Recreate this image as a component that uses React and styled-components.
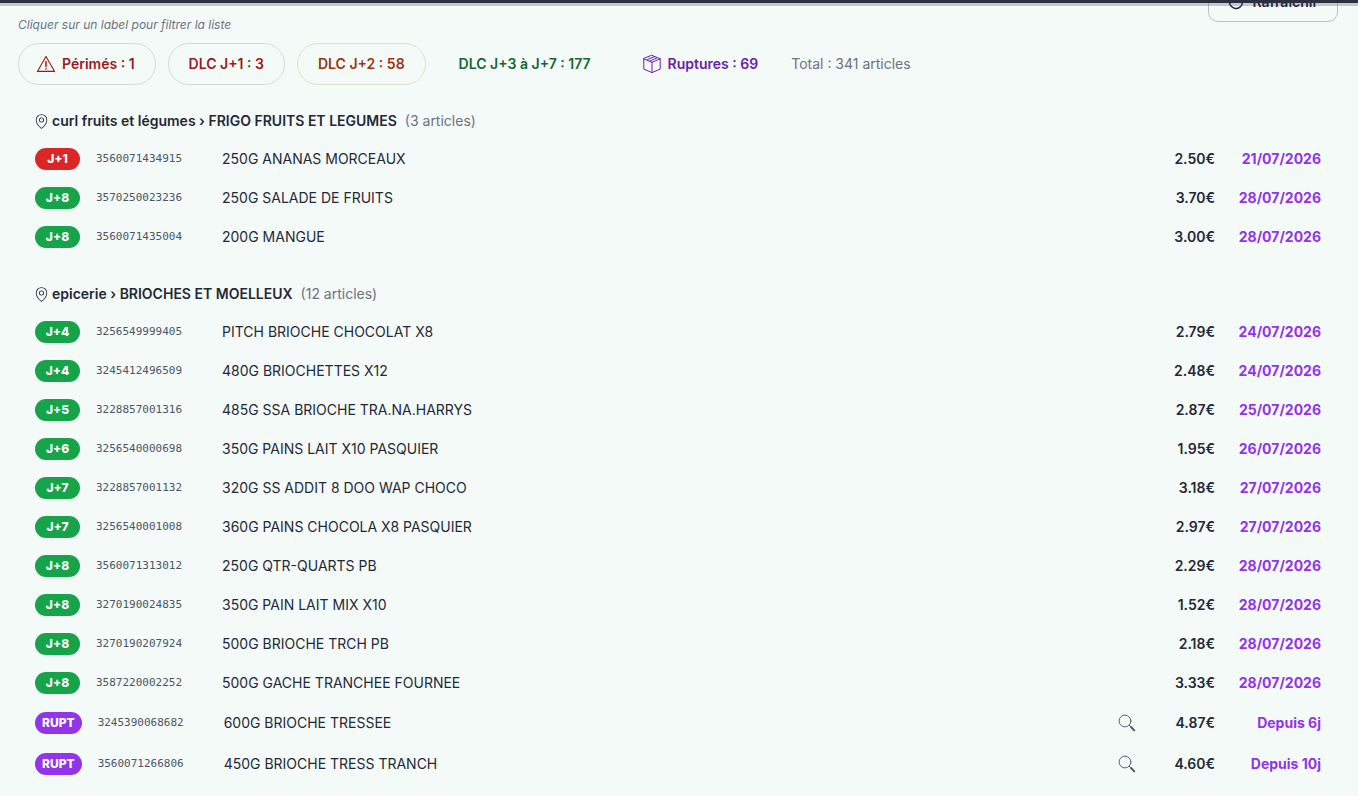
import React from 'react';
import styled, { createGlobalStyle } from 'styled-components';
import { PiMapPinLight } from 'react-icons/pi';

const WarningIcon = () => (
  <svg
    width="1em"
    height="1em"
    viewBox="0 0 20 20"
    fill="none"
    stroke="currentColor"
    strokeLinejoin="round"
    strokeLinecap="round"
  >
    <path d="M10 2.4 18.6 17.4H1.4Z" strokeWidth="1.1" />
    <path d="M10 7.6V12.4M10 14.8V15" strokeWidth="1.5" />
  </svg>
);

const PackageIcon = () => (
  <svg
    width="1em"
    height="1em"
    viewBox="0 0 20 20"
    fill="none"
    stroke="currentColor"
    strokeWidth="1"
    strokeLinejoin="round"
    strokeLinecap="round"
  >
    <path d="M10 1.4 18.2 4.8V15.1L10 18.6 1.8 15.1V4.8Z" />
    <path d="M1.8 4.8 10 8.3 18.2 4.8M10 8.3V18.6" />
    <path d="M5.6 6.4V5.4L12.8 2.6M7.6 7.2 14.9 3.9" />
  </svg>
);

const SearchIcon = () => (
  <svg
    width="1em"
    height="1em"
    viewBox="0 0 18 18"
    fill="none"
    stroke="#4b5563"
    strokeLinecap="round"
  >
    <circle cx="7" cy="7" r="5.9" strokeWidth="0.9" />
    <path d="M11.3 11.3 12.9 12.9" strokeWidth="1" />
    <path d="M13 13 16.3 16.3" strokeWidth="1.9" />
  </svg>
);

const RefreshIcon = () => (
  <svg
    width="1em"
    height="1em"
    viewBox="0 0 16 16"
    fill="none"
    stroke="currentColor"
    strokeWidth="1.5"
    strokeLinecap="round"
    strokeLinejoin="round"
  >
    <path d="M12.6 3.4A6.5 6.5 0 1 0 14.5 8" />
    <path d="M12.8 0.8V3.8H9.8" />
  </svg>
);

const FILTERS = [
  { label: 'Périmés : 1', color: '#991b1b', border: '#d5dcdc', icon: WarningIcon },
  { label: 'DLC J+1 : 3', color: '#991b1b', border: '#d5dcdc' },
  { label: 'DLC J+2 : 58', color: '#9a3412', border: '#e3e0c8' },
  { label: 'DLC J+3 à J+7 : 177', color: '#166534', border: 'transparent' },
  { label: 'Ruptures : 69', color: '#6b21a8', border: 'transparent', icon: PackageIcon },
];

const BADGE_COLORS = {
  urgent: '#dc2626',
  ok: '#16a34a',
  rupture: '#9333ea',
};

const GROUPS = [
  {
    zone: 'curl fruits et légumes',
    shelf: 'FRIGO FRUITS ET LEGUMES',
    items: [
      { badge: 'J+1', type: 'urgent', ean: '3560071434915', name: '250G ANANAS MORCEAUX', price: '2.50€', date: '21/07/2026' },
      { badge: 'J+8', type: 'ok', ean: '3570250023236', name: '250G SALADE DE FRUITS', price: '3.70€', date: '28/07/2026' },
      { badge: 'J+8', type: 'ok', ean: '3560071435004', name: '200G MANGUE', price: '3.00€', date: '28/07/2026' },
    ],
  },
  {
    zone: 'epicerie',
    shelf: 'BRIOCHES ET MOELLEUX',
    items: [
      { badge: 'J+4', type: 'ok', ean: '3256549999405', name: 'PITCH BRIOCHE CHOCOLAT X8', price: '2.79€', date: '24/07/2026' },
      { badge: 'J+4', type: 'ok', ean: '3245412496509', name: '480G BRIOCHETTES X12', price: '2.48€', date: '24/07/2026' },
      { badge: 'J+5', type: 'ok', ean: '3228857001316', name: '485G SSA BRIOCHE TRA.NA.HARRYS', price: '2.87€', date: '25/07/2026' },
      { badge: 'J+6', type: 'ok', ean: '3256540000698', name: '350G PAINS LAIT X10 PASQUIER', price: '1.95€', date: '26/07/2026' },
      { badge: 'J+7', type: 'ok', ean: '3228857001132', name: '320G SS ADDIT 8 DOO WAP CHOCO', price: '3.18€', date: '27/07/2026' },
      { badge: 'J+7', type: 'ok', ean: '3256540001008', name: '360G PAINS CHOCOLA X8 PASQUIER', price: '2.97€', date: '27/07/2026' },
      { badge: 'J+8', type: 'ok', ean: '3560071313012', name: '250G QTR-QUARTS PB', price: '2.29€', date: '28/07/2026' },
      { badge: 'J+8', type: 'ok', ean: '3270190024835', name: '350G PAIN LAIT MIX X10', price: '1.52€', date: '28/07/2026' },
      { badge: 'J+8', type: 'ok', ean: '3270190207924', name: '500G BRIOCHE TRCH PB', price: '2.18€', date: '28/07/2026' },
      { badge: 'J+8', type: 'ok', ean: '3587220002252', name: '500G GACHE TRANCHEE FOURNEE', price: '3.33€', date: '28/07/2026' },
      { badge: 'RUPT', type: 'rupture', ean: '3245390068682', name: '600G BRIOCHE TRESSEE', price: '4.87€', date: 'Depuis 6j' },
      { badge: 'RUPT', type: 'rupture', ean: '3560071266806', name: '450G BRIOCHE TRESS TRANCH', price: '4.60€', date: 'Depuis 10j' },
    ],
  },
];

const Article = ({ item }) => (
  <Row>
    <Badge $type={item.type}>{item.badge}</Badge>
    <Ean>{item.ean}</Ean>
    <Name>{item.name}</Name>
    {item.type === 'rupture' && (
      <SearchButton type="button" aria-label={`Rechercher ${item.name}`}>
        <SearchIcon />
      </SearchButton>
    )}
    <Price>{item.price}</Price>
    <Expiry>{item.date}</Expiry>
  </Row>
);

const App = () => {
  return (
    <Page>
      <GlobalStyle />
      <TopBar />
      <Content>
        <Header>
          <Hint>Cliquer sur un label pour filtrer la liste</Hint>
          <RefreshButton type="button">
            <RefreshIcon />
            Rafraîchir
          </RefreshButton>
        </Header>
        <Filters>
          {FILTERS.map(({ label, color, border, icon: Icon }) => (
            <Filter key={label} type="button" $color={color} $border={border}>
              {Icon && <Icon />}
              {label}
            </Filter>
          ))}
          <Total>Total : 341 articles</Total>
        </Filters>
        <Groups>
          {GROUPS.map(group => (
            <section key={group.shelf}>
              <GroupTitle>
                <PiMapPinLight />
                {group.zone} › {group.shelf}
                <Count>({group.items.length} articles)</Count>
              </GroupTitle>
              <List>
                {group.items.map(item => (
                  <Article key={item.ean} item={item} />
                ))}
              </List>
            </section>
          ))}
        </Groups>
      </Content>
    </Page>
  );
};

export default App;

const GlobalStyle = createGlobalStyle`
  * {
    box-sizing: border-box;
  }

  body {
    margin: 0;
    background: #f4faf8;
    color: #1f2937;
    font-family: Inter, 'Liberation Sans', sans-serif;
    font-size: 14px;
    line-height: 22px;
  }

  button {
    font: inherit;
    color: inherit;
    cursor: pointer;
  }

  svg {
    flex-shrink: 0;
  }
`;

const Page = styled.div`
  min-height: 100vh;
  overflow: hidden;
`;

const TopBar = styled.div`
  position: relative;
  z-index: 1;
  height: 3px;
  background: #2c2f3f;
  box-shadow: 0 3px 0 rgba(44, 47, 63, 0.24);
`;

const Content = styled.main`
  padding: 0 20px 0 18px;
`;

const Header = styled.header`
  display: flex;
  align-items: flex-end;
  justify-content: space-between;
  height: 33px;
`;

const Hint = styled.p`
  margin: 0;
  color: #6b7280;
  font-size: 12px;
  font-style: italic;
`;

const RefreshButton = styled.button`
  display: flex;
  align-items: center;
  align-self: flex-start;
  gap: 8px;
  height: 40px;
  margin-top: -21px;
  padding: 0 19px;
  border: 1px solid #bcc2c4;
  border-radius: 10px;
  background: transparent;
  font-weight: 600;

  svg {
    font-size: 16px;
  }
`;

const Filters = styled.div`
  display: flex;
  flex-wrap: wrap;
  align-items: center;
  gap: 12px;
  margin-top: 7px;
`;

const Filter = styled.button`
  display: flex;
  align-items: center;
  gap: 6px;
  height: 42px;
  padding: 0 20px;
  border: 1px solid ${props => props.$border};
  border-radius: 21px;
  background: transparent;
  color: ${props => props.$color};
  font-weight: 600;

  svg {
    margin-left: -3px;
    font-size: 20px;
  }
`;

const Total = styled.span`
  color: #6b7280;
`;

const Groups = styled.div`
  display: grid;
  gap: 26px;
  padding: 25px 17px;
`;

const GroupTitle = styled.h2`
  display: flex;
  align-items: center;
  margin: 0 0 8px;
  font-size: 14px;
  font-weight: 600;

  svg {
    margin: 0 2px 0 -2px;
    font-size: 17px;
  }
`;

const Count = styled.span`
  margin-left: 8px;
  color: #6b7280;
  font-weight: 400;
`;

const List = styled.ul`
  margin: 0;
  padding: 0;
  list-style: none;
`;

const Row = styled.li`
  display: flex;
  align-items: center;
  gap: 16px;
  padding: 8px 0;
  border-bottom: 1px solid transparent;
`;

const Badge = styled.span`
  min-width: 45px;
  padding: 0 7px;
  border-radius: 11px;
  background: ${props => BADGE_COLORS[props.$type]};
  color: #fff;
  font-size: 12px;
  font-weight: 800;
  text-align: center;
`;

const Ean = styled.span`
  min-width: 110px;
  color: #4b5563;
  font-family: 'DejaVu Sans Mono', monospace;
  font-size: 11px;
`;

const Name = styled.span`
  flex: 1;
`;

const SearchButton = styled.button`
  display: flex;
  padding: 3px;
  border: none;
  background: transparent;
  font-size: 18px;
`;

const Price = styled.span`
  min-width: 60px;
  font-weight: 600;
  text-align: right;
`;

const Expiry = styled.span`
  min-width: 90px;
  color: #9333ea;
  font-weight: 700;
  text-align: right;
`;
